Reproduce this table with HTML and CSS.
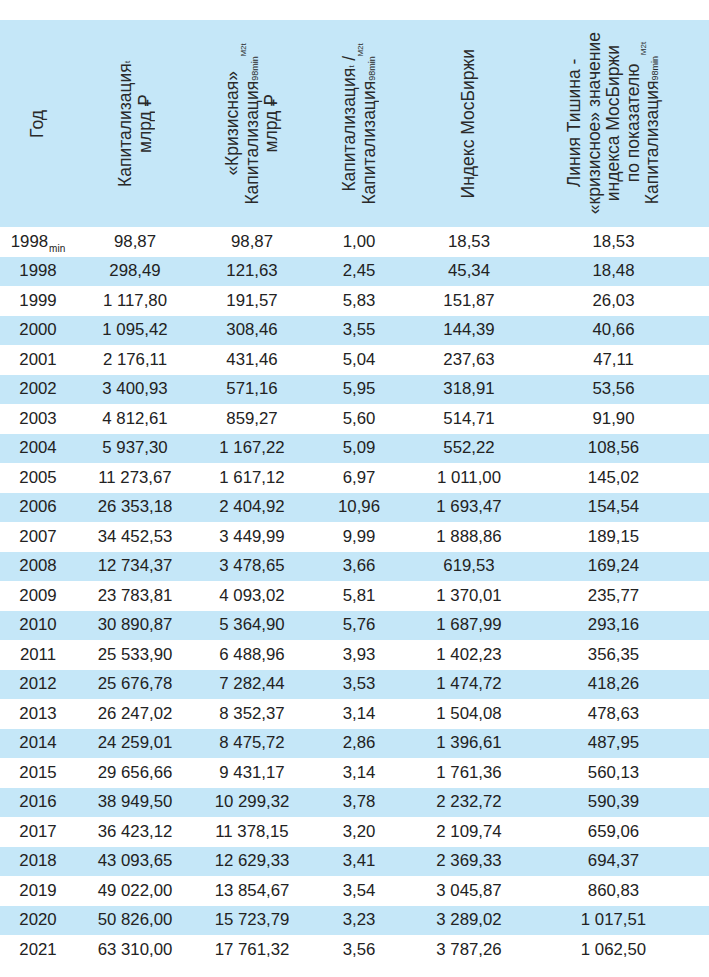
FILE: index.html
```html
<!DOCTYPE html>
<html lang="ru">
<head>
<meta charset="utf-8">
<title>Капитализация</title>
<link rel="stylesheet" href="styles.css">
</head>
<body>
<table class="tbl">
  <colgroup>
    <col class="c1"><col class="c2"><col class="c3"><col class="c4"><col class="c5"><col class="c6">
  </colgroup>
  <thead>
    <tr>
      <th><div class="hcell"><span class="rot">Год</span></div></th>
      <th><div class="hcell"><span class="rot">Капитализация<sub class="st">t</sub><br>млрд ₽</span></div></th>
      <th><div class="hcell"><span class="rot">«Кризисная»<br>Капитализация<sub class="sm">98min</sub><sup class="sp">M2t</sup><br>млрд ₽</span></div></th>
      <th><div class="hcell"><span class="rot">Капитализация<sub class="st">t</sub> /<br>Капитализация<sub class="sm">98min</sub><sup class="sp">M2t</sup></span></div></th>
      <th><div class="hcell"><span class="rot">Индекс МосБиржи</span></div></th>
      <th class="last"><div class="hcell"><span class="rot">Линия Тишина -<br>«кризисное» значение<br>индекса МосБиржи<br>по показателю<br>Капитализация<sub class="sm">98min</sub><sup class="sp">M2t</sup></span></div></th>
    </tr>
  </thead>
  <tbody>
    <tr><td>1998<sub class="ymin">min</sub></td><td>98,87</td><td>98,87</td><td>1,00</td><td>18,53</td><td class="last">18,53</td></tr>
    <tr><td>1998</td><td>298,49</td><td>121,63</td><td>2,45</td><td>45,34</td><td class="last">18,48</td></tr>
    <tr><td>1999</td><td>1 117,80</td><td>191,57</td><td>5,83</td><td>151,87</td><td class="last">26,03</td></tr>
    <tr><td>2000</td><td>1 095,42</td><td>308,46</td><td>3,55</td><td>144,39</td><td class="last">40,66</td></tr>
    <tr><td>2001</td><td>2 176,11</td><td>431,46</td><td>5,04</td><td>237,63</td><td class="last">47,11</td></tr>
    <tr><td>2002</td><td>3 400,93</td><td>571,16</td><td>5,95</td><td>318,91</td><td class="last">53,56</td></tr>
    <tr><td>2003</td><td>4 812,61</td><td>859,27</td><td>5,60</td><td>514,71</td><td class="last">91,90</td></tr>
    <tr><td>2004</td><td>5 937,30</td><td>1 167,22</td><td>5,09</td><td>552,22</td><td class="last">108,56</td></tr>
    <tr><td>2005</td><td>11 273,67</td><td>1 617,12</td><td>6,97</td><td>1 011,00</td><td class="last">145,02</td></tr>
    <tr><td>2006</td><td>26 353,18</td><td>2 404,92</td><td>10,96</td><td>1 693,47</td><td class="last">154,54</td></tr>
    <tr><td>2007</td><td>34 452,53</td><td>3 449,99</td><td>9,99</td><td>1 888,86</td><td class="last">189,15</td></tr>
    <tr><td>2008</td><td>12 734,37</td><td>3 478,65</td><td>3,66</td><td>619,53</td><td class="last">169,24</td></tr>
    <tr><td>2009</td><td>23 783,81</td><td>4 093,02</td><td>5,81</td><td>1 370,01</td><td class="last">235,77</td></tr>
    <tr><td>2010</td><td>30 890,87</td><td>5 364,90</td><td>5,76</td><td>1 687,99</td><td class="last">293,16</td></tr>
    <tr><td>2011</td><td>25 533,90</td><td>6 488,96</td><td>3,93</td><td>1 402,23</td><td class="last">356,35</td></tr>
    <tr><td>2012</td><td>25 676,78</td><td>7 282,44</td><td>3,53</td><td>1 474,72</td><td class="last">418,26</td></tr>
    <tr><td>2013</td><td>26 247,02</td><td>8 352,37</td><td>3,14</td><td>1 504,08</td><td class="last">478,63</td></tr>
    <tr><td>2014</td><td>24 259,01</td><td>8 475,72</td><td>2,86</td><td>1 396,61</td><td class="last">487,95</td></tr>
    <tr><td>2015</td><td>29 656,66</td><td>9 431,17</td><td>3,14</td><td>1 761,36</td><td class="last">560,13</td></tr>
    <tr><td>2016</td><td>38 949,50</td><td>10 299,32</td><td>3,78</td><td>2 232,72</td><td class="last">590,39</td></tr>
    <tr><td>2017</td><td>36 423,12</td><td>11 378,15</td><td>3,20</td><td>2 109,74</td><td class="last">659,06</td></tr>
    <tr><td>2018</td><td>43 093,65</td><td>12 629,33</td><td>3,41</td><td>2 369,33</td><td class="last">694,37</td></tr>
    <tr><td>2019</td><td>49 022,00</td><td>13 854,67</td><td>3,54</td><td>3 045,87</td><td class="last">860,83</td></tr>
    <tr><td>2020</td><td>50 826,00</td><td>15 723,79</td><td>3,23</td><td>3 289,02</td><td class="last">1 017,51</td></tr>
    <tr><td>2021</td><td>63 310,00</td><td>17 761,32</td><td>3,56</td><td>3 787,26</td><td class="last">1 062,50</td></tr>
  </tbody>
</table>
</body>
</html>
```

FILE: styles.css
```css
html, body {
  margin: 0;
  padding: 0;
  background: #ffffff;
}
body {
  padding-top: 20px;
  font-family: "Liberation Sans", Roboto, "Noto Sans", sans-serif;
  color: #222222;
}
.tbl {
  width: 709px;
  border-collapse: collapse;
  table-layout: fixed;
}
.c1 { width: 76px; }
.c2 { width: 118px; }
.c3 { width: 116px; }
.c4 { width: 98px; }
.c5 { width: 122px; }
.c6 { width: 179px; }

thead tr {
  background: #c5e7f8;
}
th {
  padding: 0;
  font-weight: normal;
}
th.last, td.last {
  padding-right: 12px;
}
.hcell {
  height: 207px;
  display: flex;
  align-items: center;
  justify-content: center;
}
.rot {
  writing-mode: vertical-rl;
  transform: rotate(180deg);
  text-align: center;
  font-size: 17.5px;
  line-height: 19.5px;
  white-space: nowrap;
  color: #2a2a2a;
}
.st {
  font-size: 8px;
  vertical-align: -3px;
  line-height: 0;
  margin-left: 1px;
}
.sm {
  font-size: 9px;
  vertical-align: -3px;
  line-height: 0;
}
.sp {
  font-size: 8px;
  vertical-align: 8px;
  line-height: 0;
  margin-left: 8px;
}
td {
  height: 29.5px;
  padding: 0;
  text-align: center;
  font-size: 16.8px;
  line-height: 18px;
  white-space: nowrap;
}
tbody tr:nth-child(even) {
  background: #c5e7f8;
}
.ymin {
  font-size: 10px;
  vertical-align: -5px;
  line-height: 0;
  margin-left: 1px;
}
```
